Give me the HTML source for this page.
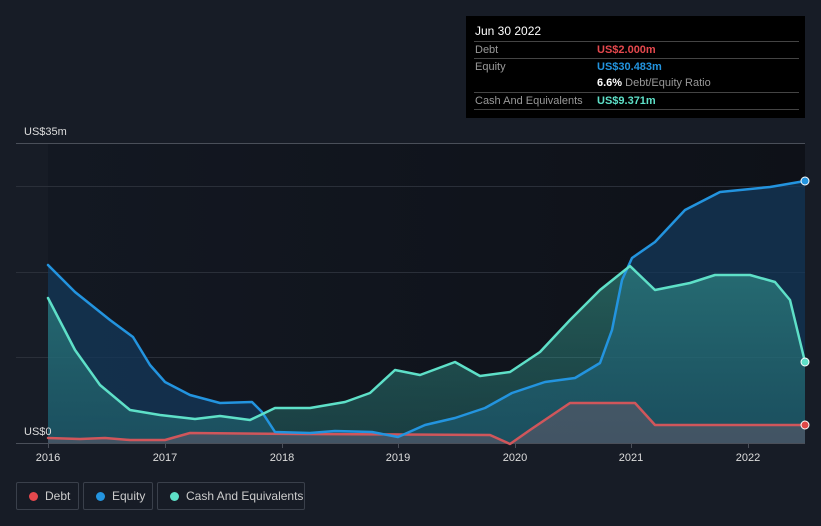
<!DOCTYPE html>
<html><head><meta charset="utf-8"><style>
html,body{margin:0;padding:0;background:#171c26;width:821px;height:526px;overflow:hidden;font-family:"Liberation Sans",sans-serif;}
.tt{position:absolute;left:466px;top:16px;width:339px;height:102px;background:#000;}
.tt .h{position:absolute;left:9px;top:8px;color:#fff;font-size:12px;}
.row{position:absolute;left:8px;width:325px;border-top:1px solid #444;height:17px;font-size:11px;color:#999;}
.row span{position:absolute;top:2px;white-space:nowrap;}
.lg{position:absolute;top:482px;height:28px;border:1px solid #3a404b;border-radius:2px;color:#ccc;font-size:12px;box-sizing:border-box;white-space:nowrap;}
.lg i{position:absolute;left:12px;top:9px;width:9px;height:9px;border-radius:50%;}
.lg span{position:absolute;left:28px;top:6px;white-space:nowrap;}
</style></head><body>
<svg width="821" height="526" style="position:absolute;left:0;top:0">
<defs>
<linearGradient id="bg" x1="0" y1="0" x2="1" y2="0"><stop offset="0" stop-color="#131822"/><stop offset="1" stop-color="#0e1118"/></linearGradient>
<linearGradient id="cf" x1="0" y1="0" x2="0" y2="1"><stop offset="0" stop-color="#3fb7a5" stop-opacity="0.45"/><stop offset="1" stop-color="#2a8a85" stop-opacity="0.35"/></linearGradient>
</defs>
<rect x="48" y="143" width="757" height="300" fill="url(#bg)"/>
<g stroke="#2a2f39" stroke-width="1">
<line x1="16" y1="143.5" x2="805" y2="143.5" stroke="#4a4f59"/>
<line x1="16" y1="186.5" x2="805" y2="186.5"/>
<line x1="16" y1="272.5" x2="805" y2="272.5"/>
<line x1="16" y1="357.5" x2="805" y2="357.5"/>
<line x1="16" y1="443.5" x2="805" y2="443.5" stroke="#4a4f59"/>
</g>
<polygon fill="#14385a" fill-opacity="0.75" points="48,443 48,265 75,292 110,320 133,337 150,365 165,382 190,395 220,403 252,402 262,412 275,432 310,433 335,431 372,432 398,437 425,425 455,418 485,408 512,393 545,382 575,378 600,363 612,330 622,280 632,258 655,242 685,210 720,192 770,187 805,181 805,443"/>
<polygon fill="url(#cf)" points="48,443 48,298 75,350 100,385 130,410 160,415 195,419 220,416 250,420 275,408 310,408 345,402 370,393 395,370 420,375 455,362 480,376 510,372 540,352 570,320 600,290 630,266 655,290 690,283 715,275 750,275 775,282 790,300 805,362 805,443"/>
<polygon fill="#6a5a6a" fill-opacity="0.5" points="48,443 48,438 80,439 105,438 130,440 165,440 190,433 300,434 490,435 510,444 530,430 570,403 635,403 655,425 805,425 805,443"/>
<g fill="none" stroke-width="2.5" stroke-linejoin="round" stroke-linecap="round">
<polyline stroke="#d0565b" points="48,438 80,439 105,438 130,440 165,440 190,433 300,434 490,435 510,444 530,430 570,403 635,403 655,425 805,425"/>
<polyline stroke="#2394df" points="48,265 75,292 110,320 133,337 150,365 165,382 190,395 220,403 252,402 262,412 275,432 310,433 335,431 372,432 398,437 425,425 455,418 485,408 512,393 545,382 575,378 600,363 612,330 622,280 632,258 655,242 685,210 720,192 770,187 805,181"/>
<polyline stroke="#5ee0c8" points="48,298 75,350 100,385 130,410 160,415 195,419 220,416 250,420 275,408 310,408 345,402 370,393 395,370 420,375 455,362 480,376 510,372 540,352 570,320 600,290 630,266 655,290 690,283 715,275 750,275 775,282 790,300 805,362"/>
</g>
<circle cx="805" cy="181" r="4" fill="#2394df" stroke="#fff" stroke-width="1"/>
<circle cx="805" cy="362" r="4" fill="#5ee0c8" stroke="#fff" stroke-width="1"/>
<circle cx="805" cy="425" r="4" fill="#e04848" stroke="#fff" stroke-width="1"/>
<g stroke="#4a4f59"><line x1="48.5" y1="443" x2="48.5" y2="448"/><line x1="165.5" y1="443" x2="165.5" y2="448"/><line x1="282.5" y1="443" x2="282.5" y2="448"/><line x1="398.5" y1="443" x2="398.5" y2="448"/><line x1="515.5" y1="443" x2="515.5" y2="448"/><line x1="631.5" y1="443" x2="631.5" y2="448"/><line x1="748.5" y1="443" x2="748.5" y2="448"/></g>
<g fill="#ddd" font-size="11" font-family="Liberation Sans, sans-serif">
<text x="24" y="135">US$35m</text>
<text x="24" y="435">US$0</text>
<g text-anchor="middle"><text x="48" y="461">2016</text><text x="165" y="461">2017</text><text x="282" y="461">2018</text><text x="398" y="461">2019</text><text x="515" y="461">2020</text><text x="631" y="461">2021</text><text x="748" y="461">2022</text></g>
</g>
</svg>
<div class="tt">
<div class="h">Jun 30 2022</div>
<div class="row" style="top:25px"><span style="left:1px">Debt</span><span style="left:123px;color:#e5484d;font-weight:bold">US$2.000m</span></div>
<div class="row" style="top:42px"><span style="left:1px">Equity</span><span style="left:123px;color:#2394df;font-weight:bold">US$30.483m</span></div>
<div class="row" style="top:59px;border-top:none"><span style="left:123px"><b style="color:#fff">6.6%</b> Debt/Equity Ratio</span></div>
<div class="row" style="top:76px"><span style="left:1px">Cash And Equivalents</span><span style="left:123px;color:#5ee0c8;font-weight:bold">US$9.371m</span></div>
<div class="row" style="top:93px;height:0"></div>
</div>
<div class="lg" style="left:16px;width:63px"><i style="background:#e5484d"></i><span>Debt</span></div>
<div class="lg" style="left:83px;width:70px"><i style="background:#2394df"></i><span>Equity</span></div>
<div class="lg" style="left:157px;width:148px"><i style="background:#5ee0c8"></i><span>Cash And Equivalents</span></div>
</body></html>
